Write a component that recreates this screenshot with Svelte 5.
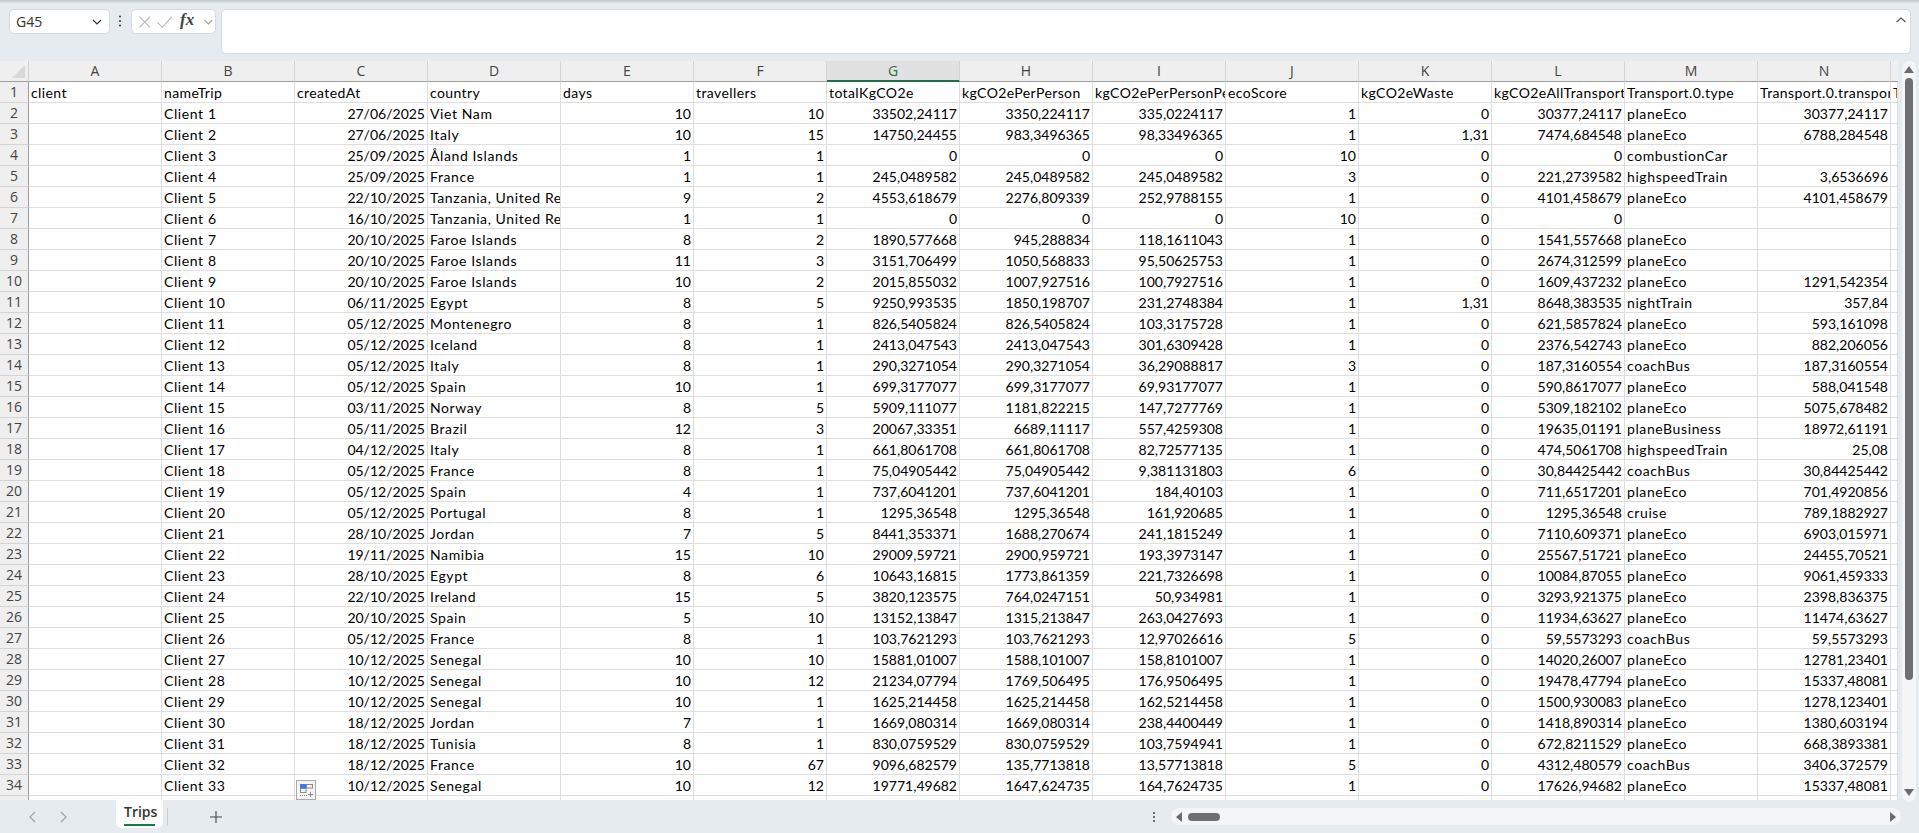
<script>
  const headers = ['client','nameTrip','createdAt','country','days','travellers','totalKgCO2e','kgCO2ePerPerson','kgCO2ePerPersonPerDay','ecoScore','kgCO2eWaste','kgCO2eAllTransport','Transport.0.type','Transport.0.transportKgCO2e','Transport.1.type'];
  const letters = ['A','B','C','D','E','F','G','H','I','J','K','L','M','N'];
  const raw = `27/06/2025|Viet Nam|10|10|33502,24117|3350,224117|335,0224117|1|0|30377,24117|planeEco|30377,24117
27/06/2025|Italy|10|15|14750,24455|983,3496365|98,33496365|1|1,31|7474,684548|planeEco|6788,284548
25/09/2025|Åland Islands|1|1|0|0|0|10|0|0|combustionCar|
25/09/2025|France|1|1|245,0489582|245,0489582|245,0489582|3|0|221,2739582|highspeedTrain|3,6536696
22/10/2025|Tanzania, United Republic of|9|2|4553,618679|2276,809339|252,9788155|1|0|4101,458679|planeEco|4101,458679
16/10/2025|Tanzania, United Republic of|1|1|0|0|0|10|0|0||
20/10/2025|Faroe Islands|8|2|1890,577668|945,288834|118,1611043|1|0|1541,557668|planeEco|
20/10/2025|Faroe Islands|11|3|3151,706499|1050,568833|95,50625753|1|0|2674,312599|planeEco|
20/10/2025|Faroe Islands|10|2|2015,855032|1007,927516|100,7927516|1|0|1609,437232|planeEco|1291,542354
06/11/2025|Egypt|8|5|9250,993535|1850,198707|231,2748384|1|1,31|8648,383535|nightTrain|357,84
05/12/2025|Montenegro|8|1|826,5405824|826,5405824|103,3175728|1|0|621,5857824|planeEco|593,161098
05/12/2025|Iceland|8|1|2413,047543|2413,047543|301,6309428|1|0|2376,542743|planeEco|882,206056
05/12/2025|Italy|8|1|290,3271054|290,3271054|36,29088817|3|0|187,3160554|coachBus|187,3160554
05/12/2025|Spain|10|1|699,3177077|699,3177077|69,93177077|1|0|590,8617077|planeEco|588,041548
03/11/2025|Norway|8|5|5909,111077|1181,822215|147,7277769|1|0|5309,182102|planeEco|5075,678482
05/11/2025|Brazil|12|3|20067,33351|6689,11117|557,4259308|1|0|19635,01191|planeBusiness|18972,61191
04/12/2025|Italy|8|1|661,8061708|661,8061708|82,72577135|1|0|474,5061708|highspeedTrain|25,08
05/12/2025|France|8|1|75,04905442|75,04905442|9,381131803|6|0|30,84425442|coachBus|30,84425442
05/12/2025|Spain|4|1|737,6041201|737,6041201|184,40103|1|0|711,6517201|planeEco|701,4920856
05/12/2025|Portugal|8|1|1295,36548|1295,36548|161,920685|1|0|1295,36548|cruise|789,1882927
28/10/2025|Jordan|7|5|8441,353371|1688,270674|241,1815249|1|0|7110,609371|planeEco|6903,015971
19/11/2025|Namibia|15|10|29009,59721|2900,959721|193,3973147|1|0|25567,51721|planeEco|24455,70521
28/10/2025|Egypt|8|6|10643,16815|1773,861359|221,7326698|1|0|10084,87055|planeEco|9061,459333
22/10/2025|Ireland|15|5|3820,123575|764,0247151|50,934981|1|0|3293,921375|planeEco|2398,836375
20/10/2025|Spain|5|10|13152,13847|1315,213847|263,0427693|1|0|11934,63627|planeEco|11474,63627
05/12/2025|France|8|1|103,7621293|103,7621293|12,97026616|5|0|59,5573293|coachBus|59,5573293
10/12/2025|Senegal|10|10|15881,01007|1588,101007|158,8101007|1|0|14020,26007|planeEco|12781,23401
10/12/2025|Senegal|10|12|21234,07794|1769,506495|176,9506495|1|0|19478,47794|planeEco|15337,48081
10/12/2025|Senegal|10|1|1625,214458|1625,214458|162,5214458|1|0|1500,930083|planeEco|1278,123401
18/12/2025|Jordan|7|1|1669,080314|1669,080314|238,4400449|1|0|1418,890314|planeEco|1380,603194
18/12/2025|Tunisia|8|1|830,0759529|830,0759529|103,7594941|1|0|672,8211529|planeEco|668,3893381
18/12/2025|France|10|67|9096,682579|135,7713818|13,57713818|5|0|4312,480579|coachBus|3406,372579
10/12/2025|Senegal|10|12|19771,49682|1647,624735|164,7624735|1|0|17626,94682|planeEco|15337,48081`;
  const rows = raw.split('\n').map((l, i) => ['', 'Client ' + (i + 1), ...l.split('|'), '']);
  const leftCols = new Set([0, 1, 3, 12, 14]);
</script>

<div class="app">
  <div class="strip"></div>
  <div class="topbar">
    <div class="box namebox">
      <span>G45</span>
      <svg width="12" height="8" viewBox="0 0 12 8"><path d="M2 2l4 4 4-4" fill="none" stroke="#333" stroke-width="1.2"/></svg>
    </div>
    <svg class="dots" width="4" height="14" viewBox="0 0 4 14"><circle cx="2" cy="2.5" r="1.1"/><circle cx="2" cy="7" r="1.1"/><circle cx="2" cy="11.5" r="1.1"/></svg>
    <div class="box fxbox">
      <svg width="14" height="14" viewBox="0 0 14 14"><path d="M1.5 1.5l11 11M12.5 1.5l-11 11" fill="none" stroke="#b4b4b4" stroke-width="1.1"/></svg>
      <svg width="18" height="14" viewBox="0 0 18 14"><path d="M1.5 7.5l5 5 10-11" fill="none" stroke="#b4b4b4" stroke-width="1.1"/></svg>
      <span class="fx">fx</span>
      <svg width="11" height="8" viewBox="0 0 11 8"><path d="M1.5 2l4 4 4-4" fill="none" stroke="#9a9a9a" stroke-width="1.1"/></svg>
    </div>
    <div class="box formula">
      <svg width="12" height="8" viewBox="0 0 12 8"><path d="M1.5 6l4.5-4 4.5 4" fill="none" stroke="#555" stroke-width="1.2"/></svg>
    </div>
  </div>

  <div class="middle">
    <div class="sheet">
      <div class="grid">
        <div class="corner"><svg width="14" height="14" viewBox="0 0 14 14"><path d="M14 1v13H1z" fill="#d9d9d9"/></svg></div>
        {#each letters as l}
          <div class="colhead" class:selected={l === 'G'}>{l}</div>
        {/each}
        <div class="colhead last"></div>

        <div class="rowhead">1</div>
        {#each headers as h}
          <div class="cell title">{h}</div>
        {/each}

        {#each rows as r, i}
          <div class="rowhead">{i + 2}</div>
          {#each r as v, c}
            <div class="cell" class:right={!leftCols.has(c)}>{v}</div>
          {/each}
        {/each}

        <div class="rowhead"></div>
        {#each Array(15) as _}
          <div class="cell"></div>
        {/each}
      </div>
      <div class="quick">
        <svg width="18" height="18" viewBox="0 0 18 18">
          <rect x="3.5" y="3.5" width="6" height="4" fill="#3b78e7"/>
          <rect x="3.5" y="3.5" width="5.5" height="3.5" fill="none" stroke="#3b78e7"/>
          <rect x="9.5" y="3.5" width="6" height="3.5" fill="none" stroke="#8a8a8a"/>
          <rect x="3.5" y="7.5" width="5.5" height="4" fill="none" stroke="#8a8a8a"/>
          <path d="M3 14.5h7" stroke="#8a8a8a" stroke-dasharray="1 1"/>
          <path d="M13.5 11v5M11 13.5h5" stroke="#8a8a8a"/>
        </svg>
      </div>
    </div>
    <div class="vscroll">
      <svg width="10" height="7" viewBox="0 0 10 7"><path d="M5 0l5 7H0z" fill="#6b6b6b"/></svg>
      <div class="vthumb"></div>
      <svg width="10" height="7" viewBox="0 0 10 7"><path d="M5 7l5-7H0z" fill="#6b6b6b"/></svg>
    </div>
  </div>

  <div class="bottom">
    <svg class="nav" width="10" height="14" viewBox="0 0 10 14"><path d="M8 2L3 7l5 5" fill="none" stroke="#a0a4a8" stroke-width="1.2"/></svg>
    <svg class="nav next" width="10" height="14" viewBox="0 0 10 14"><path d="M2 2l5 5-5 5" fill="none" stroke="#a0a4a8" stroke-width="1.2"/></svg>
    <div class="tab"><span>Trips</span></div>
    <div class="sep"></div>
    <svg class="plus" width="12" height="12" viewBox="0 0 12 12"><path d="M6 0v12M0 6h12" stroke="#444" stroke-width="1.1"/></svg>
    <div class="spacer"></div>
    <svg class="dots small" width="4" height="12" viewBox="0 0 4 12"><circle cx="2" cy="2" r="1"/><circle cx="2" cy="6" r="1"/><circle cx="2" cy="10" r="1"/></svg>
    <div class="hscroll">
      <svg width="6" height="10" viewBox="0 0 6 10"><path d="M0 5l6-5v10z" fill="#6b6b6b"/></svg>
      <div class="hthumb"></div>
      <div class="spacer"></div>
      <svg width="6" height="10" viewBox="0 0 6 10"><path d="M6 5L0 0v10z" fill="#6b6b6b"/></svg>
    </div>
  </div>
</div>

<style>
  :global(body) { margin: 0; background: #e6ebef; }
  .app {
    width: 1919px; height: 833px; overflow: hidden;
    display: flex; flex-direction: column;
    background: #e6ebef;
    font-family: "Open Sans", "Noto Sans", sans-serif;
  }
  .strip { height: 3px; background: linear-gradient(#c3c8cc, #dfe4e8); }
  .topbar {
    height: 58px; box-sizing: border-box;
    display: flex; align-items: flex-start; padding: 6px 8px 0 9px;
  }
  .box {
    background: #fff; border: 1px solid #d6dbdf; border-radius: 5px;
    box-sizing: border-box; display: flex; align-items: center;
  }
  .namebox {
    width: 101px; height: 25px; padding: 0 6px; justify-content: space-between;
    font-size: 14px; color: #333;
  }
  .dots { fill: #444; margin: 5px 9px 0 8px; }
  .fxbox { width: 85px; height: 25px; padding: 0 1px 0 6px; gap: 4px; }
  .fx {
    font-family: "Liberation Serif", serif; font-style: italic; font-weight: 700;
    font-size: 17px; color: #444; margin: -3px 0 0 3px; width: 20px;
  }
  .formula {
    flex: 1; height: 45px; margin-left: 5px; padding: 0 3px 0 0;
    justify-content: flex-end; align-items: flex-start;
  }
  .formula svg { margin-top: 6px; }

  .middle { height: 739px; display: flex; }
  .sheet { width: 1898px; height: 739px; overflow: hidden; position: relative; background: #fff; }
  .grid {
    display: grid;
    grid-template-columns: 29px repeat(14, 133px) 7px;
    grid-auto-rows: 21px;
    font-family: "Lato", "Open Sans", sans-serif;
    font-size: 14px; color: #000;
  }
  .corner {
    background: #efefef; border-right: 1px solid #d0d0d0; border-bottom: 1px solid #9e9e9e;
    box-sizing: border-box; display: flex; justify-content: flex-end; align-items: flex-end;
    padding: 0 3px 3px 0;
  }
  .corner svg { display: block; }
  .colhead {
    background: #efefef; border-right: 1px solid #d4d4d4; border-bottom: 1px solid #9e9e9e;
    box-sizing: border-box; text-align: center; line-height: 20px;
    font-family: "Open Sans", "Noto Sans", sans-serif; font-size: 14px; color: #444;
  }
  .colhead.last { border-right: none; }
  .colhead.selected {
    background: #e1e1e1; color: #1e7145; border-bottom: 2px solid #1e7145;
  }
  .rowhead {
    background: #efefef; border-right: 1px solid #9e9e9e; border-bottom: 1px solid #d4d4d4;
    box-sizing: border-box; text-align: center; line-height: 20px;
    font-family: "Open Sans", "Noto Sans", sans-serif; font-size: 14px; color: #444;
  }
  .cell {
    border-right: 1px solid #dedede; border-bottom: 1px solid #dedede;
    box-sizing: border-box; padding: 1px 2px 0; line-height: 20px;
    white-space: nowrap; overflow: hidden; letter-spacing: 0.6px;
  }
  .cell.title { letter-spacing: 0.4px; }
  .cell.right { text-align: right; letter-spacing: 0; }

  .quick {
    position: absolute; left: 296px; top: 719px;
    width: 20px; height: 20px; box-sizing: border-box;
    background: #f4f4f4; border: 1px solid #aaa;
    display: flex; align-items: center; justify-content: center;
  }
  .quick svg { display: block; }

  .vscroll {
    width: 14px; height: 741px; margin-left: 4px; box-sizing: border-box;
    background: #f4f5f6; border-radius: 7px; position: relative; z-index: 1;
    display: flex; flex-direction: column; align-items: center; padding: 5px 0 6px;
  }
  .vthumb { width: 8px; height: 602px; margin: 5px 0 auto; background: #6f6f6f; border-radius: 4px; }

  .bottom { flex: 1; display: flex; align-items: center; padding: 0 18px 0 27px; position: relative; }
  .nav { flex: none; }
  .nav.next { margin-left: 22px; }
  .tab {
    align-self: flex-start; margin-left: 47px;
    width: 47px; height: 28px; box-sizing: border-box;
    background: #fff; border-radius: 0 0 6px 6px;
    display: flex; justify-content: center; padding-top: 2px;
  }
  .tab span {
    font-size: 14px; font-weight: 600; color: #333; height: 22px; line-height: 20px;
    border-bottom: 2px solid #107c41; width: 31px; text-align: center;
  }
  .sep { width: 1px; height: 18px; background: #c8cdd1; margin: 0 0 0 4px; }
  .plus { margin-left: 42px; }
  .spacer { flex: 1; }
  .dots.small { margin: 0 15px 0 0; }
  .hscroll {
    width: 730px; height: 17px; box-sizing: border-box; background: #f4f5f6; border-radius: 8px;
    display: flex; align-items: center; padding: 0 5px;
  }
  .hthumb { width: 32px; height: 8px; background: #6f6f6f; border-radius: 4px; margin-left: 6px; }
</style>
